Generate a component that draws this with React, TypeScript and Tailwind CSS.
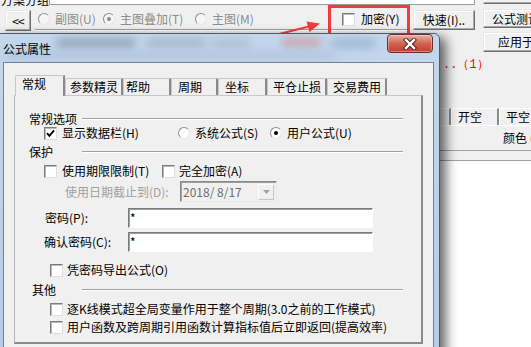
import React from 'react';

const Box = ({ checked }: { checked?: boolean }) => (
  <span className="flex h-[13px] w-[13px] shrink-0 items-center justify-center border border-[#7c7c7c] border-b-[#dedede] border-r-[#dedede] bg-white shadow-[inset_1px_1px_0_#b9b9b9]">
    {checked && (
      <svg width="9" height="9" viewBox="0 0 9 9">
        <path d="M1 4.2 L3.4 6.8 L8 1.4" fill="none" stroke="#000" strokeWidth="1.9" />
      </svg>
    )}
  </span>
);

const Radio = ({ on, dim }: { on?: boolean; dim?: boolean }) => (
  <span
    className={`flex h-[12px] w-[12px] shrink-0 items-center justify-center rounded-full border border-[#8d8d8d] border-b-[#e6e6e6] border-r-[#e6e6e6] ${
      dim ? 'bg-[#f6f6f6]' : 'bg-white'
    }`}
  >
    {on && <span className={`h-[4px] w-[4px] rounded-full ${dim ? 'bg-[#8a8a8a]' : 'bg-black'}`} />}
  </span>
);

const Btn = ({ children, className }: { children: React.ReactNode; className: string }) => (
  <div
    className={`flex shrink-0 items-center border border-[#6f6f6f] border-l-[#e8e8e8] border-t-[#e8e8e8] bg-[#f0f0f0] shadow-[inset_-1px_-1px_0_#a8a8a8,inset_1px_1px_0_#fff] ${className}`}
  >
    {children}
  </div>
);

const Group = ({ label, pad }: { label: string; pad?: boolean }) => (
  <div className="flex h-[14px] items-center">
    <span className={`w-[53px] shrink-0 ${pad ? 'pl-[3px]' : ''}`}>{label}</span>
    <span className="h-[2px] flex-1 border-b border-t border-b-white border-t-[#a0a0a0]" />
  </div>
);

const Field = () => (
  <div className="flex h-[20px] w-[245px] items-center border border-[#7a7a7a] border-b-white border-r-white bg-white pl-[1px] shadow-[inset_1px_1px_0_#a0a0a0]">
    *
  </div>
);

const tabs = [
  { label: '常规', w: 'w-[50px]', pl: 'pl-[6px]' },
  { label: '参数精灵', w: 'w-[58px]', pl: 'pl-[4px]' },
  { label: '帮助', w: 'w-[48px]', pl: 'pl-[2px]' },
  { label: '周期', w: 'w-[47px]', pl: 'pl-[6px]' },
  { label: '坐标', w: 'w-[49px]', pl: 'pl-[6px]' },
  { label: '平仓止损', w: 'w-[60px]', pl: 'pl-[5px]' },
  { label: '交易费用', w: 'w-[60px]', pl: 'pl-[5px]' },
];

export default function App() {
  return (
    <div className="relative h-[347px] w-[531px] overflow-hidden bg-[#f0f0f0] font-['Noto_Sans_CJK_SC','Noto_Sans',sans-serif] text-[12px] leading-[14px] text-black">
      {/* editor window behind the dialog */}
      <div className="flex flex-col">
        <div className="-mt-[16px] flex h-[21px] items-end">
          <span className="-mb-[2px] w-[49px] shrink-0 pl-[1px]">方案分组</span>
          <div className="h-[21px] w-[426px] shrink-0 border border-[#9a9a9a] bg-white" />
          <Btn className="mb-[1px] ml-[8px] h-[20px] w-[60px]">&nbsp;</Btn>
        </div>

        <div className="flex h-[47px]">
          <div className="flex w-[483px] shrink-0 items-start pl-[5px]">
            <Btn className="mt-[5px] h-[21px] w-[26px] justify-center tracking-[-1px]">&lt;&lt;</Btn>
            <div className="ml-[4px] flex w-[375px] shrink-0 flex-col pt-[7px]">
              <div className="flex h-[14px] items-center text-[#8c8c8c]">
                <div className="ml-[3px] flex w-[65px] items-center gap-[5px]">
                  <Radio dim />
                  <span>副图(U)</span>
                </div>
                <div className="flex w-[92px] items-center gap-[5px]">
                  <Radio dim on />
                  <span>主图叠加(T)</span>
                </div>
                <div className="flex w-[147px] items-center gap-[5px]">
                  <Radio dim />
                  <span>主图(M)</span>
                </div>
                <div className="flex items-center gap-[6px] text-black">
                  <Box />
                  <span>加密(Y)</span>
                </div>
              </div>
              <div className="mt-[3px] h-[2px] border-b border-t border-b-white border-t-[#a0a0a0]" />
            </div>
            <Btn className="ml-[3px] mt-[5px] h-[20px] w-[62px] justify-center">快速(I)..</Btn>
          </div>
          <div className="flex shrink-0 flex-col">
            <Btn className="mt-[4px] h-[19px] w-[80px] whitespace-nowrap pl-[8px]">公式测试</Btn>
            <Btn className="mt-[4px] h-[20px] w-[80px] whitespace-nowrap pl-[14px]">应用于</Btn>
          </div>
        </div>

        <div className="mt-[6px] h-[14px] pl-[443px] font-['Liberation_Mono',monospace] text-[#ff0000]">..（1）</div>

        <div className="mt-[36px] flex h-[17px] pl-[403px]">
          {['平多', '开空', '平空'].map((t) => (
            <div
              key={t}
              className="w-[48px] shrink-0 whitespace-nowrap rounded-tl-[2px] border-l border-r-2 border-t border-l-white border-r-[#8a8a8a] border-t-white pl-[6px] pt-[1px]"
            >
              {t}
            </div>
          ))}
        </div>
        <div className="border-t border-white">
          <div className="flex h-[24px] items-center whitespace-nowrap pl-[503px]">颜色 (C)</div>
          <div className="h-[10px] border-t border-[#a0a0a0]" />
          <div className="h-[200px] border-t border-[#a0a0a0] bg-white" />
        </div>
      </div>

      {/* annotation */}
      <div className="absolute left-[328px] top-[5px] h-[32px] w-[82px] border-[3px] border-[#f03c3c]" />
      <svg className="pointer-events-none absolute left-0 top-0" width="531" height="347">
        <line x1="192" y1="56" x2="309" y2="26.5" stroke="#f63b3b" strokeWidth="2.2" />
        <polygon points="320,23.5 306.5,21.5 309.5,32" fill="#f63b3b" />
      </svg>

      {/* 公式属性 dialog */}
      <div className="absolute left-[-5px] top-[33px] flex h-[330px] w-[445px] flex-col rounded-t-[6px] border border-[#4e5b69] bg-gradient-to-b from-[#c3d7ec] to-[#b4cce7] shadow-[6px_4px_12px_rgba(0,0,0,0.6)]">
        <div className="relative flex h-[28px] shrink-0 items-start justify-between overflow-hidden">
          <div className="absolute left-[60px] top-[4px] h-[10px] w-[80px] rounded-full bg-[#95a7ba] blur-[4px]" />
          <div className="absolute left-[150px] top-[5px] h-[8px] w-[60px] rounded-full bg-[#a3b3c4] blur-[4px]" />
          <div className="absolute left-[215px] top-[6px] h-[7px] w-[40px] rounded-full bg-[#a9bacb] blur-[4px]" />
          <div className="absolute left-[285px] top-[4px] h-[9px] w-[40px] rounded-full bg-[#c7a5ad] blur-[4px]" />
          <div className="absolute left-[335px] top-[5px] h-[9px] w-[45px] rounded-full bg-[#9fb6cf] blur-[4px]" />
          <div className="absolute left-[10px] top-[18px] h-[8px] w-[330px] rounded-full bg-[#aec4dc] blur-[5px]" />
          <span className="relative mt-[8px] pl-[7px]">公式属性</span>
          <div className="relative mr-[6px] flex h-[19px] w-[46px] items-center justify-center rounded-[4px] border border-[#6a2f28] bg-gradient-to-b from-[#e9b0a4] via-[#d2624f] to-[#c23f2c] shadow-[inset_0_0_0_1px_rgba(255,255,255,0.35)]">
            <svg width="14" height="12" viewBox="0 0 14 12">
              <path d="M3 2 L11 10 M11 2 L3 10" stroke="#4a2a26" strokeWidth="4.4" strokeLinecap="square" />
              <path d="M3 2 L11 10 M11 2 L3 10" stroke="#fff" strokeWidth="2.4" strokeLinecap="square" />
            </svg>
          </div>
        </div>

        <div className="flex flex-1 pl-[7px] pr-[5px]">
          <div className="flex-1 border border-[#6f8299] bg-[#f0f0f0] pl-[10px] pt-[12px]">
            <div className="ml-[1px] flex h-[20px] items-end">
              {tabs.map((t, i) => (
                <div
                  key={t.label}
                  className={`shrink-0 rounded-tl-[2px] border-l border-r-2 border-t border-l-[#c8c8c8] border-r-[#8a8a8a] border-t-[#c8c8c8] bg-[#f0f0f0] ${t.w} ${t.pl} ${
                    i === 0 ? 'relative z-10 -mb-[1px] h-[21px] pt-[1px]' : 'h-[17px] pt-[1px]'
                  }`}
                >
                  {t.label}
                </div>
              ))}
            </div>

            <div className="flex h-[249px] w-[409px] flex-col border-b-2 border-l border-r-2 border-t border-b-[#8a8a8a] border-l-[#b4b4b4] border-r-[#8a8a8a] border-t-[#c8c8c8] pl-[14px] pr-[18px] pt-[16px]">
              <Group label="常规选项" />
              <div className="flex h-[14px] items-center">
                <div className="ml-[15px] flex w-[134px] items-center gap-[5px]">
                  <Box checked />
                  <span>显示数据栏(H)</span>
                </div>
                <div className="flex w-[92px] items-center gap-[5px]">
                  <Radio />
                  <span>系统公式(S)</span>
                </div>
                <div className="flex items-center gap-[5px]">
                  <Radio on />
                  <span>用户公式(U)</span>
                </div>
              </div>

              <div className="mt-[5px]">
                <Group label="保护" />
              </div>
              <div className="mt-[5px] flex h-[14px] items-center">
                <div className="ml-[15px] flex w-[118px] items-center gap-[5px]">
                  <Box />
                  <span>使用期限限制(T)</span>
                </div>
                <div className="flex items-center gap-[4px]">
                  <Box />
                  <span>完全加密(A)</span>
                </div>
              </div>
              <div className="mt-[3px] flex h-[21px] items-center">
                <span className="ml-[36px] w-[115px] shrink-0 text-[#a0a0a0]">使用日期截止到(D):</span>
                <div className="flex h-[21px] w-[97px] items-center justify-between border border-[#8a8a8a] border-b-[#e8e8e8] border-r-[#e8e8e8] bg-[#f0f0f0] pl-[2px] pr-[2px] text-[#6d6d6d] shadow-[inset_1px_1px_0_#a0a0a0]">
                  <span>2018/ 8/17</span>
                  <div className="flex h-[16px] w-[16px] items-center justify-center border border-[#c4c4c4] border-l-white border-t-white bg-[#f0f0f0]">
                    <svg width="7" height="4" viewBox="0 0 7 4">
                      <polygon points="0,0 7,0 3.5,4" fill="#a0a0a0" />
                    </svg>
                  </div>
                </div>
              </div>
              <div className="mt-[6px] flex h-[20px] items-center">
                <span className="ml-[16px] w-[83px] shrink-0">密码(P):</span>
                <Field />
              </div>
              <div className="mt-[4px] flex h-[20px] items-center">
                <span className="ml-[15px] w-[84px] shrink-0">确认密码(C):</span>
                <Field />
              </div>
              <div className="ml-[21px] mt-[11px] flex h-[14px] items-center gap-[4px]">
                <Box />
                <span>凭密码导出公式(O)</span>
              </div>

              <div className="mt-[6px]">
                <Group label="其他" pad />
              </div>
              <div className="ml-[21px] mt-[5px] flex h-[14px] items-center gap-[4px]">
                <Box />
                <span className="whitespace-nowrap">逐K线模式超全局变量作用于整个周期(3.0之前的工作模式)</span>
              </div>
              <div className="ml-[21px] mt-[4px] flex h-[14px] items-center gap-[4px]">
                <Box />
                <span className="whitespace-nowrap">用户函数及跨周期引用函数计算指标值后立即返回(提高效率)</span>
              </div>
            </div>
          </div>
        </div>
      </div>
    </div>
  );
}
